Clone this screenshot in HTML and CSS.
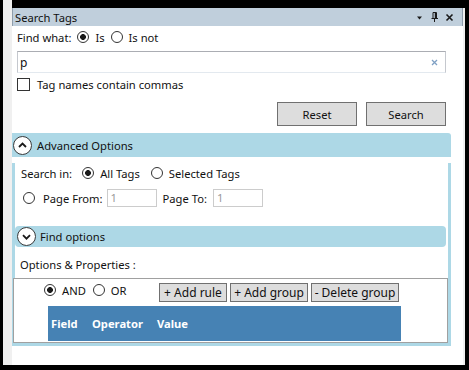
FILE: index.html
```html
<!DOCTYPE html>
<html lang="en">
<head>
    <meta charset="UTF-8">
    <title>Search Tags</title>
    <link rel="stylesheet" href="styles.css">
</head>
<body>
    <div class="dock">
        <div class="edge"></div>
        <div class="pane">
            <div class="titlebar">
                <span class="title">Search Tags</span>
                <span class="title-tools">
                    <svg width="9" height="9" viewBox="0 0 9 9"><path d="M2 3.5 H7 L4.5 6.5 Z" fill="#1a1a1a"/></svg>
                    <svg width="9" height="10" viewBox="0 0 9 10"><path d="M3 0.5 H6.5 V6" fill="none" stroke="#1a1a1a" stroke-width="1"/><path d="M3 0.5 V6" stroke="#1a1a1a" stroke-width="1"/><path d="M5.5 1 V6" stroke="#1a1a1a" stroke-width="1.4"/><path d="M1.5 6.5 H8" stroke="#1a1a1a" stroke-width="1"/><path d="M4.5 6.5 V10" stroke="#1a1a1a" stroke-width="1"/></svg>
                    <svg width="9" height="9" viewBox="0 0 9 9"><path d="M1.5 1.5 L7.5 7.5 M7.5 1.5 L1.5 7.5" stroke="#1a1a1a" stroke-width="1.6"/></svg>
                </span>
            </div>
            <div class="body">
                <div class="top">
                    <div class="row">
                        <span>Find what:</span>
                        <label class="radio on gap-left">Is</label>
                        <label class="radio gap-left">Is not</label>
                    </div>
                    <div class="textbox">
                        <span>p</span>
                        <svg width="7" height="7" viewBox="0 0 7 7"><path d="M1 1 L6 6 M6 1 L1 6" stroke="#7fa0c4" stroke-width="1.3"/></svg>
                    </div>
                    <label class="row check-row"><span class="checkbox"></span>Tag names contain commas</label>
                    <div class="actions">
                        <button class="button">Reset</button>
                        <button class="button">Search</button>
                    </div>
                </div>

                <div class="expander">
                    <div class="exp-header">
                        <span class="chev"><svg width="9" height="6" viewBox="0 0 9 6"><path d="M1 5 L4.5 1.5 L8 5" fill="none" stroke="#1a1a1a" stroke-width="1.8"/></svg></span>
                        Advanced Options
                    </div>
                    <div class="exp-body">
                        <div class="row search-row">
                            <span>Search in:</span>
                            <label class="radio on radio-first">All Tags</label>
                            <label class="radio radio-next">Selected Tags</label>
                        </div>
                        <div class="row page-row">
                            <label class="radio radio-page">Page From:</label>
                            <span class="field field-from">1</span>
                            <span class="page-to">Page To:</span>
                            <span class="field">1</span>
                        </div>

                        <div class="sub-header">
                            <span class="chev"><svg width="9" height="6" viewBox="0 0 9 6"><path d="M1 1.2 L4.5 4.7 L8 1.2" fill="none" stroke="#1a1a1a" stroke-width="1.8"/></svg></span>
                            Find options
                        </div>
                        <div class="row options-row">Options &amp; Properties :</div>

                        <div class="rules">
                            <div class="logic">
                                <div class="logic-radios">
                                    <label class="radio on">AND</label>
                                    <label class="radio or">OR</label>
                                </div>
                                <button class="small-btn w-rule">+ Add rule</button>
                                <button class="small-btn w-group">+ Add group</button>
                                <button class="small-btn w-delete">- Delete group</button>
                            </div>
                            <div class="grid-head">
                                <span class="col col-field">Field</span>
                                <span class="col col-op">Operator</span>
                                <span class="col">Value</span>
                            </div>
                        </div>
                    </div>
                </div>
            </div>
        </div>
    </div>
</body>
</html>
```

FILE: styles.css
```css
/* Docked "Search Tags" tool window */
body {
    margin: 0;
    width: 469px;
    height: 370px;
    overflow: hidden;
    background-color: #000;
    font-family: "Segoe UI", "Noto Sans", sans-serif;
    font-size: 11.2px;
    color: #111;
}
.dock {
    display: flex;
    width: 462px;
    height: 365px;
    margin-left: 3px;
}
.edge {
    width: 9px;
    background-color: #f0f0f0;
}
.pane {
    flex: 1;
    margin-top: 8px;
    display: flex;
    flex-direction: column;
    border-right: 2px solid #f0f0f0;
}
.titlebar {
    height: 18px;
    box-sizing: border-box;
    background-color: #c0cfdc;
    border-left: 1px solid #8e9dab;
    border-right: 1px solid #8e9dab;
    display: flex;
    align-items: center;
    justify-content: space-between;
    padding: 0 8px 0 2px;
}
.title-tools {
    display: flex;
    align-items: center;
    gap: 6px;
}
.title-tools svg {
    display: block;
}
.body {
    flex: 1;
    background-color: #fff;
    display: flex;
    flex-direction: column;
}
.top {
    padding: 1px 17px 0 5px;
}
.row {
    height: 20px;
    display: flex;
    align-items: center;
    white-space: nowrap;
}

/* radio buttons */
.radio {
    display: inline-flex;
    align-items: center;
    gap: 6px;
}
.radio::before {
    content: "";
    width: 12px;
    height: 12px;
    box-sizing: border-box;
    border: 1px solid #333;
    border-radius: 50%;
    background-color: #fff;
}
.radio.on::before {
    background: radial-gradient(circle, #1a1a1a 0 2.6px, #fff 3.2px);
}
.gap-left {
    margin-left: 6px;
}

.textbox {
    margin-top: 4px;
    height: 22px;
    box-sizing: border-box;
    border: 1px solid #c5c8ce;
    border-top-color: #abadb3;
    border-bottom-color: #e3e9ef;
    display: flex;
    align-items: center;
    justify-content: space-between;
    padding: 0 7px 0 2px;
    font-size: 12px;
}
.check-row {
    margin-top: 1px;
    gap: 7px;
}
.checkbox {
    width: 13px;
    height: 13px;
    box-sizing: border-box;
    border: 1px solid #333;
    background-color: #fff;
}
.actions {
    margin-top: 8px;
    display: flex;
    justify-content: flex-end;
    gap: 9px;
}
.button {
    width: 80px;
    height: 24px;
    background-color: #dddddd;
    border: 1px solid #707070;
    font: inherit;
    color: #111;
    padding: 0;
}

/* expanders */
.expander {
    margin-top: 7px;
    margin-right: 12px;
}
.exp-header {
    height: 24px;
    background-color: #add8e6;
    border-top-right-radius: 3px;
    display: flex;
    align-items: center;
    gap: 5px;
    padding-left: 1px;
}
.chev {
    width: 19px;
    height: 19px;
    box-sizing: border-box;
    border: 1.5px solid #3a3a3a;
    border-radius: 50%;
    background-color: #fff;
    display: flex;
    align-items: center;
    justify-content: center;
}
.chev svg {
    display: block;
}
.exp-body {
    border: 3px solid #add8e6;
    border-top: 0;
}
.search-row {
    margin-top: 6px;
    padding-left: 6px;
}
.radio-first {
    margin-left: 10px;
}
.radio-next {
    margin-left: 11px;
}
.page-row {
    margin-top: 5px;
    padding-left: 8px;
}
.radio-page {
    gap: 8px;
}
.field {
    width: 50px;
    height: 18px;
    box-sizing: border-box;
    border: 1px solid #cccccc;
    color: #9a9a9a;
    padding-left: 3px;
    line-height: 16px;
    margin-left: 6px;
}
.field-from {
    margin-left: 4px;
}
.page-to {
    margin-left: 6px;
}
.sub-header {
    margin-top: 18px;
    margin-right: 2px;
    height: 21px;
    background-color: #add8e6;
    border-radius: 4px;
    display: flex;
    align-items: center;
    gap: 4px;
    padding-left: 2px;
}
.options-row {
    margin-top: 7px;
    padding-left: 5px;
}
.rules {
    margin-top: 4px;
    margin-left: -2px;
    height: 65px;
    box-sizing: border-box;
    border: 1px solid #a0a0a0;
    background-color: #fff;
    padding: 4px 0 0 30px;
}
.logic {
    display: flex;
    gap: 3px;
    height: 19px;
}
.logic-radios {
    width: 112px;
    display: flex;
    align-items: flex-start;
    gap: 7px;
    padding-top: 1px;
}
.logic-radios .radio {
    height: 12px;
}
.small-btn {
    height: 19px;
    background-color: #dddddd;
    border: 1px solid #707070;
    font: inherit;
    font-size: 12px;
    color: #111;
    padding: 0;
}
.w-rule {
    width: 68px;
}
.w-group {
    width: 78px;
}
.w-delete {
    width: 88px;
}
.grid-head {
    margin-top: 4px;
    margin-left: 4px;
    width: 353px;
    height: 35px;
    background-color: #4682b4;
    color: #fff;
    font-weight: bold;
    display: flex;
    align-items: center;
}
.col {
    padding-left: 3px;
}
.col-field {
    width: 38px;
}
.col-op {
    width: 62px;
}
```
